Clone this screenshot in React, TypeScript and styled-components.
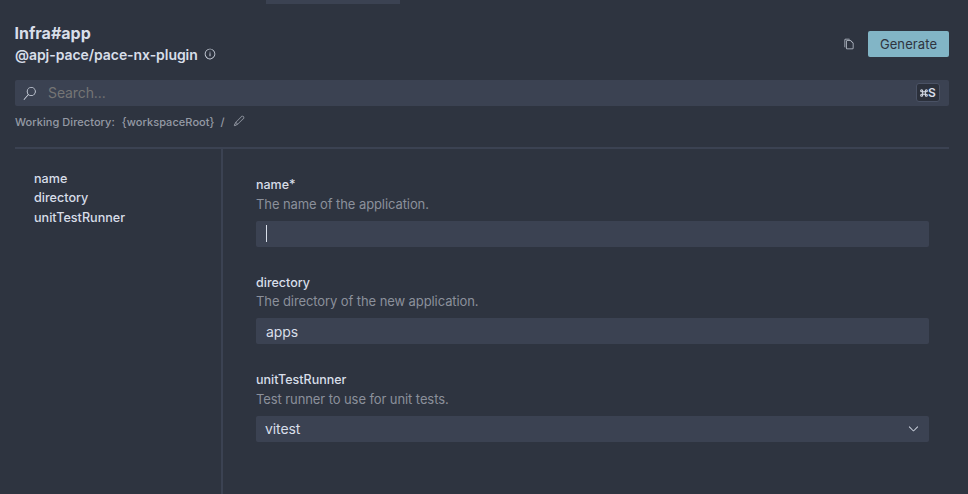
import React from 'react';
import styled, { createGlobalStyle } from 'styled-components';
import { VscChevronDown, VscCopy, VscEdit, VscInfo, VscSearch } from 'react-icons/vsc';

const GlobalStyle = createGlobalStyle`
  *, *::before, *::after { box-sizing: border-box; }
  html, body, #root { height: 100%; }
  body {
    margin: 0;
    overflow: hidden;
    background: #2e3440;
    color: #d8dee9;
    font-family: Inter, 'Liberation Sans', sans-serif;
    font-size: 13px;
  }
  button, input { font: inherit; color: inherit; }
`;

const Page = styled.div`
  height: 494px;
  display: flex;
  flex-direction: column;
  padding: 0 19px 0 15px;
`;

const TabIndicator = styled.div`
  flex: none;
  width: 134px;
  height: 4px;
  margin-left: 251px;
  background: #3b4252;
`;

const Header = styled.header`
  flex: none;
  height: 76px;
  display: flex;
  justify-content: space-between;
  padding-top: 19px;
`;

const Title = styled.h1`
  margin: 0 0 0 -0.5px;
  font-size: 16px;
  line-height: 21px;
  font-weight: 700;
`;

const Collection = styled.div`
  display: flex;
  align-items: center;
  gap: 6px;
  font-size: 14px;
  line-height: 22px;
  font-weight: 600;
  letter-spacing: -0.06px;
  svg { width: 12px; height: 12px; margin-top: -2px; }
`;

const Actions = styled.div`
  display: flex;
  align-items: center;
  gap: 13px;
  height: 26px;
  margin-top: 8px;
  svg { width: 12px; height: 12px; margin-top: -1px; color: #c4cad5; }
`;

const GenerateButton = styled.button`
  width: 81px;
  height: 26px;
  padding: 0;
  border: 0;
  border-radius: 2px;
  background: #82b5c6;
  color: #2e3440;
  font-size: 13px;
  letter-spacing: 0.1px;
`;

const SearchBar = styled.div`
  flex: none;
  display: flex;
  align-items: center;
  height: 26px;
  padding: 0 9px 0 8px;
  border-radius: 2px;
  background: #3b4252;
  svg { width: 13px; height: 13px; flex: none; }
`;

const SearchInput = styled.input`
  flex: 1;
  min-width: 0;
  margin-left: 12px;
  padding: 0 0 1px;
  border: 0;
  outline: 0;
  background: transparent;
  font-size: 14px;
  letter-spacing: -0.1px;
  &::placeholder { color: #757575; opacity: 1; }
`;

const Shortcut = styled.kbd`
  display: flex;
  align-items: center;
  justify-content: center;
  width: 24px;
  height: 19px;
  margin-bottom: 1px;
  border: 1px solid #4a5265;
  border-radius: 3px;
  background: #2b303b;
  font: 600 12px Inter, 'DejaVu Sans', sans-serif;
  && svg { width: 8px; height: 8px; }
`;

const WorkingDirectory = styled.div`
  flex: none;
  display: flex;
  align-items: center;
  height: 41px;
  padding-bottom: 9px;
  font-size: 11px;
  font-weight: 500;
  letter-spacing: 0.06px;
  color: #959aa5;
  svg { width: 12px; height: 12px; margin: -2px 0 0 8px; }
`;

const DirectoryPath = styled.span`
  margin: 0 6px 0 7px;
`;

const Body = styled.div`
  flex: 1;
  min-height: 0;
  display: flex;
  border-top: 2px solid #3b4252;
`;

const Sidebar = styled.nav`
  flex: none;
  width: 208px;
  padding: 19.9px 0 0 19px;
  border-right: 2px solid #3b4252;
`;

const NavItem = styled.div`
  height: 19.5px;
  line-height: 19.5px;
  font-size: 12.6px;
  font-weight: 500;
`;

const Form = styled.main`
  flex: 1;
  padding: 26px 20px 0 33px;
`;

const Field = styled.section`
  height: 97.5px;
`;

const Label = styled.label`
  display: block;
  line-height: 19.5px;
  font-weight: 500;
  font-size: 12.5px;
`;

const Description = styled.p`
  margin: 0 0 6.9px;
  line-height: 19.5px;
  letter-spacing: -0.09px;
  color: #8b909b;
`;

const Control = styled.div`
  display: flex;
  align-items: center;
  justify-content: space-between;
  height: 26px;
  padding: 0 8px 0 9px;
  border-radius: 2px;
  background: #3b4252;
  font-size: 14px;
  letter-spacing: -0.1px;
  svg { width: 15px; height: 15px; }
`;

const Caret = styled.span`
  width: 1px;
  height: 17px;
  margin: 0 0 1px 1px;
  background: #d8dee9;
`;

const Value = styled.span<{ $inset?: number }>`
  margin-left: ${(p) => p.$inset ?? 0}px;
  padding-bottom: ${(p) => (p.$inset ? 0 : 1)}px;
`;

const CommandIcon = () => (
  <svg viewBox="0 0 24 24" fill="none" stroke="currentColor" strokeWidth="3.2">
    <path d="M8 8h8v8H8zM8 8V5a3 3 0 1 0-3 3h3M16 8h3a3 3 0 1 0-3-3v3M16 16v3a3 3 0 1 0 3-3h-3M8 16H5a3 3 0 1 0 3 3v-3" />
  </svg>
);

export default function App() {
  return (
    <>
      <GlobalStyle />
      <Page>
        <TabIndicator />
        <Header>
          <div>
            <Title>Infra#app</Title>
            <Collection>@apj-pace/pace-nx-plugin <VscInfo /></Collection>
          </div>
          <Actions>
            <VscCopy />
            <GenerateButton>Generate</GenerateButton>
          </Actions>
        </Header>
        <SearchBar>
          <VscSearch />
          <SearchInput placeholder="Search..." />
          <Shortcut><CommandIcon />S</Shortcut>
        </SearchBar>
        <WorkingDirectory>
          <span>Working Directory:</span>
          <DirectoryPath>{'{workspaceRoot}'}</DirectoryPath>
          <span>/</span>
          <VscEdit />
        </WorkingDirectory>
        <Body>
          <Sidebar>
            <NavItem>name</NavItem>
            <NavItem>directory</NavItem>
            <NavItem>unitTestRunner</NavItem>
          </Sidebar>
          <Form>
            <Field>
              <Label>name*</Label>
              <Description>The name of the application.</Description>
              <Control><Caret /></Control>
            </Field>
            <Field>
              <Label>directory</Label>
              <Description>The directory of the new application.</Description>
              <Control><Value $inset={1}>apps</Value></Control>
            </Field>
            <Field>
              <Label>unitTestRunner</Label>
              <Description>Test runner to use for unit tests.</Description>
              <Control><Value>vitest</Value><VscChevronDown /></Control>
            </Field>
          </Form>
        </Body>
      </Page>
    </>
  );
}
